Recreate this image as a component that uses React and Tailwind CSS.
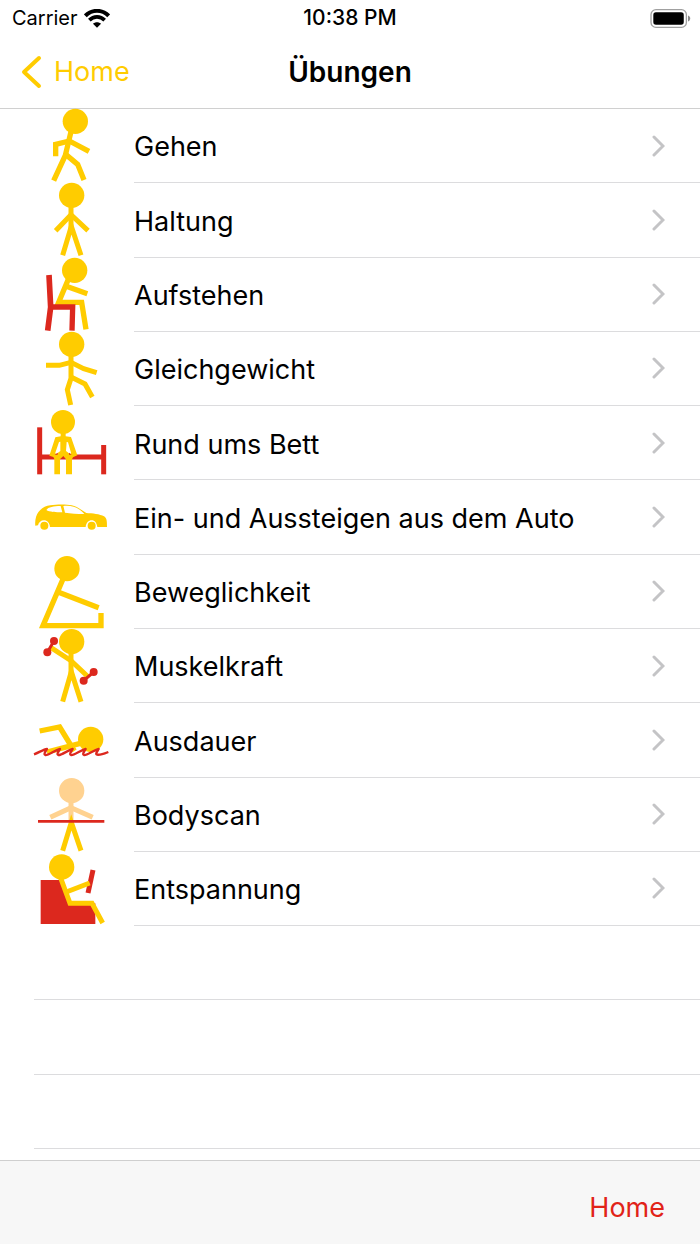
const YELLOW = "#ffcc00";
const RED = "#dc281e";
const SKIN = "#ffd290";

function Figure({ viewBox, children }) {
  return (
    <svg viewBox={viewBox} className="size-[74px] shrink-0 overflow-visible" fill="none" aria-hidden="true">
      {children}
    </svg>
  );
}

const Walking = () => (
  <Figure viewBox="27 12 222 222">
    <circle cx="151" cy="49" r="38" fill={YELLOW} />
    <g stroke={YELLOW} strokeWidth="16">
      <path d="M138 80 L132 105 L121 151 L86 227" />
      <path d="M92 154 V118 L133 108 L192 139" />
      <path d="M122 148 L158 178 L177 225" />
    </g>
  </Figure>
);

const Standing = () => (
  <Figure viewBox="27 235 222 222">
    <circle cx="140" cy="272" r="38" fill={YELLOW} />
    <g stroke={YELLOW} strokeWidth="15">
      <path d="M138 300 V375" />
      <path d="M92 378 L138 330 L189 378" />
      <path d="M113 452 L139 365 L168 452" />
    </g>
  </Figure>
);

const StandingUp = () => (
  <Figure viewBox="27 8 222 222">
    <circle cx="149" cy="45" r="38" fill={YELLOW} />
    <g stroke={YELLOW} strokeWidth="16">
      <path d="M130 72 L101 141 H170 L183 222" />
      <path d="M124 93 L187 115" />
    </g>
    <path d="M72 59 L77 155 L68 226" stroke={RED} strokeWidth="17" />
    <path d="M76 155 H143 L141 226" stroke={RED} strokeWidth="16" />
  </Figure>
);

const Balance = () => (
  <Figure viewBox="27 231 222 222">
    <circle cx="140" cy="268" r="38" fill={YELLOW} />
    <g stroke={YELLOW} strokeWidth="15">
      <path d="M138 300 V370 L127 404 L137 450" />
      <path d="M63 331 H103 L138 322 L176 341 L215 353" />
      <path d="M138 366 L180 387 L202 426" />
    </g>
  </Figure>
);

const Bed = () => (
  <Figure viewBox="27 18 222 222">
    <g stroke={RED} strokeWidth="15">
      <path d="M44 82 V223" />
      <path d="M236 135 V223" />
      <path d="M44 171 H236" />
    </g>
    <circle cx="114" cy="66" r="36" fill={YELLOW} />
    <path d="M107 98 H122 V109 L138 111 L157 166 L144 172 L141 178 V223 H123 V178 L115 168 L105 178 V223 H88 V177 L85 171 L73 167 L91 112 L107 109 Z" fill={YELLOW} />
    <path d="M102 126 L106 125 V153 L93 163 L91 158 Z M125 126 L129 127 L138 158 L136 163 L123 153 Z" fill="#fff" />
    <path d="M89 164 L98 158 L98 164 Z M132 158 L140 164 L132 164 Z" fill={RED} />
  </Figure>
);

const Car = () => (
  <Figure viewBox="27 241 222 222">
    <path d="M31 378 C29 364 33 345 41 336 C49 326 61 319 76 317 C95 314 125 314 140 317 C155 320 170 331 184 340 C202 341 225 343 237 350 C246 356 246 366 246 382 H217 C215 370 209 362 200 362 C191 362 183 370 182 382 H75 C74 370 66 362 57 362 C48 362 41 368 39 377 Z" fill={YELLOW} />
    <path d="M64 331 C70 322 86 319 107 319 L112 338 C93 338 73 337 64 331 Z M115 319 C135 317 151 321 162 329 C169 334 175 340 178 343 C157 343 137 341 120 339 Z" fill="#fff" />
    <circle cx="58" cy="378" r="12" fill={YELLOW} />
    <circle cx="200" cy="378" r="12" fill={YELLOW} />
  </Figure>
);

const Flexibility = () => (
  <Figure viewBox="27 14 222 222">
    <circle cx="126" cy="55" r="38" fill={YELLOW} />
    <g stroke={YELLOW} strokeWidth="16">
      <path d="M114 86 L54 226 H228 V188" />
      <path d="M99 125 L221 172" />
    </g>
  </Figure>
);

const Strength = () => (
  <Figure viewBox="27 237 222 222">
    <circle cx="140" cy="275" r="38" fill={YELLOW} />
    <g stroke={YELLOW} strokeWidth="15">
      <path d="M138 304 V375" />
      <path d="M78 293 L138 332 L190 381" />
      <path d="M113 455 L139 365 L168 455" />
    </g>
    <path d="M87 273 L67 307 M206 366 L176 392" stroke={RED} strokeWidth="9" />
    <g fill={RED}>
      <circle cx="87" cy="273" r="12" />
      <circle cx="67" cy="307" r="12" />
      <circle cx="206" cy="366" r="12" />
      <circle cx="176" cy="392" r="12" />
    </g>
  </Figure>
);

const Swimming = () => (
  <Figure viewBox="27 10 222 222">
    <circle cx="197" cy="119" r="38" fill={YELLOW} />
    <g stroke={YELLOW} strokeWidth="16">
      <path d="M44 94 L104 82 L148 154" />
      <path d="M66 157 L166 131" />
    </g>
    <path d="M27 164 C43 158 56 149 66 148 C62 155 55 164 61 166 C70 168 89 152 105 148 C101 155 94 164 100 166 C109 168 127 152 143 148 C139 155 132 164 138 166 C147 168 166 152 182 148 C178 155 171 164 177 166 C186 168 205 152 221 148 C217 155 210 164 216 165 C226 167 240 161 250 157" stroke={RED} strokeWidth="7" strokeLinejoin="round" />
  </Figure>
);

const BodyScan = () => (
  <Figure viewBox="27 233 222 222">
    <circle cx="140" cy="271" r="38" fill={SKIN} />
    <g stroke={SKIN} strokeWidth="15">
      <path d="M138 300 V363" />
      <path d="M76 351 L138 322 L203 351" />
    </g>
    <path d="M113 451 L139 366 L168 451" stroke={YELLOW} strokeWidth="15" />
    <path d="M39 363 H238" stroke={RED} strokeWidth="8" />
  </Figure>
);

const Relaxing = () => (
  <Figure viewBox="27 6 222 222">
    <path d="M47 90 H115 L138 160 H211 V222 H47 Z" fill={RED} />
    <circle cx="110" cy="51" r="38" fill={YELLOW} />
    <path d="M204 60 L189 129" stroke={RED} strokeWidth="15" />
    <g stroke={YELLOW} strokeWidth="15">
      <path d="M107 84 L135 160 H201 L233 219" />
      <path d="M124 126 L194 99" />
    </g>
  </Figure>
);

const EXERCISES = [
  { label: "Gehen", Icon: Walking },
  { label: "Haltung", Icon: Standing },
  { label: "Aufstehen", Icon: StandingUp },
  { label: "Gleichgewicht", Icon: Balance },
  { label: "Rund ums Bett", Icon: Bed },
  { label: "Ein- und Aussteigen aus dem Auto", Icon: Car },
  { label: "Beweglichkeit", Icon: Flexibility },
  { label: "Muskelkraft", Icon: Strength },
  { label: "Ausdauer", Icon: Swimming },
  { label: "Bodyscan", Icon: BodyScan },
  { label: "Entspannung", Icon: Relaxing },
];

const EMPTY_ROWS = [0, 1, 2];

function StatusBar() {
  return (
    <div className="grid h-9 grid-cols-3 items-center text-xl">
      <div className="flex items-center gap-1.5 pl-3">
        <span>Carrier</span>
        <svg viewBox="0 0 78 56" className="h-[19px] w-[26px]" fill="none" aria-label="WLAN">
          <path d="M4 20 C24 0 54 0 74 20" stroke="#000" strokeWidth="12" />
          <path d="M16 33 C29 20 49 20 62 33" stroke="#000" strokeWidth="11" />
          <path d="M39 56 L27 44 C34 38 44 38 51 44 Z" fill="#000" />
        </svg>
      </div>
      <span className="text-center text-[21px] font-medium">10:38 PM</span>
      <div className="flex justify-end pr-[9px]">
        <svg viewBox="0 0 123 58" className="h-[19px] w-[41px]" fill="none" aria-label="Batterie">
          <rect x="2" y="2" width="108" height="54" rx="15" stroke="#a0a0a0" strokeWidth="4" />
          <rect x="9" y="10" width="93" height="38" rx="8" fill="#000" />
          <path d="M115 20 C124 23 124 35 115 38 Z" fill="#8a8a8a" />
        </svg>
      </div>
    </div>
  );
}

export default function App() {
  return (
    <div className="flex min-h-screen flex-col bg-white font-['Inter','Liberation_Sans',sans-serif] text-black">
      <header className="border-b border-[#d0d0d0]">
        <StatusBar />
        <nav className="grid h-18 grid-cols-3 items-center px-5">
          <a href="#home" className="flex items-center gap-3 text-[27px] text-[#ffcc00]">
            <svg viewBox="0 0 22 34" className="h-[34px] w-[22px]" fill="none" aria-hidden="true">
              <path d="M19 3 L4 17 L19 31" stroke="currentColor" strokeWidth="4" strokeLinecap="round" strokeLinejoin="round" />
            </svg>
            Home
          </a>
          <h1 className="text-center text-[28px] font-semibold">Übungen</h1>
        </nav>
      </header>

      <main className="flex flex-1 flex-col pb-[11px]">
        <ul className="grid flex-1 auto-rows-fr">
          {EXERCISES.map(({ label, Icon }) => (
            <li key={label}>
              <a href={`#${label}`} className="flex h-full items-start gap-[26px] pl-[34px]">
                <Icon />
                <span className="flex h-full flex-1 items-center justify-between border-b border-[#dcdcde] pr-[35px] text-[27px]">
                  <span className="pt-1">{label}</span>
                  <svg viewBox="0 0 13 22" className="h-[22px] w-[13px]" fill="none" aria-hidden="true">
                    <path d="M2 2 L11 11 L2 20" stroke="#c4c4c6" strokeWidth="3" strokeLinecap="round" />
                  </svg>
                </span>
              </a>
            </li>
          ))}
          {EMPTY_ROWS.map((row) => (
            <li key={row} aria-hidden="true" className="ml-[34px] border-b border-[#dcdcde]" />
          ))}
        </ul>
      </main>

      <footer className="flex h-[84px] items-center justify-end border-t border-[#cfcfcf] bg-[#f7f7f7] px-[35px] pt-[11px]">
        <button type="button" className="text-[27px] text-[#e12318]">
          Home
        </button>
      </footer>
    </div>
  );
}
